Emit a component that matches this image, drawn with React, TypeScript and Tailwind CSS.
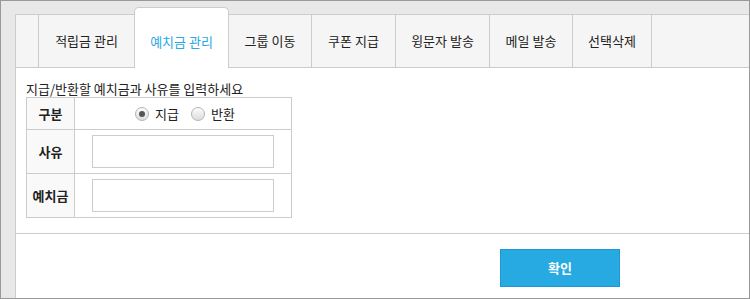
const tabs = [
  { label: "적립금 관리", w: "w-[95px]", cls: "" },
  { label: "예치금 관리", w: "w-[95px]", cls: "active" },
  { label: "그룹 이동", w: "w-[83px]", cls: "border-r" },
  { label: "쿠폰 지급", w: "w-[84px]", cls: "border-r" },
  { label: "윙문자 발송", w: "w-[94px]", cls: "border-r" },
  { label: "메일 발송", w: "w-[83px]", cls: "border-r" },
  { label: "선택삭제", w: "w-[79px]", cls: "border-r" },
];

function Radio({ checked }: { checked?: boolean }) {
  return (
    <span className="flex h-[14px] w-[14px] items-center justify-center rounded-full border border-[#b5b5b5] bg-gradient-to-b from-[#fdfdfd] to-[#dcdcdc]">
      {checked && <span className="h-[6px] w-[6px] rounded-full bg-[#555]" />}
    </span>
  );
}

export default function App() {
  return (
    <div
      className="box-border flex h-[299px] w-[750px] flex-col border border-[#999] bg-[#e8e8e8] pl-[14px] pt-[6px] text-[13px] text-[#222]"
      style={{ fontFamily: '"Noto Sans CJK KR", "Noto Sans", sans-serif' }}
    >
      {/* tab bar */}
      <div className="flex h-[61px] items-end">
        <div className="box-border h-[54px] w-[24px] border border-[#ccc] bg-[#f5f5f5]" />
        {tabs.map((t) =>
          t.cls === "active" ? (
            <div
              key={t.label}
              className={`box-border flex h-[61px] ${t.w} items-center justify-center rounded-t-[5px] border-x border-t border-[#ccc] bg-white pt-[7px] text-[#29a9e0]`}
            >
              {t.label}
            </div>
          ) : (
            <div
              key={t.label}
              className={`box-border flex h-[54px] ${t.w} items-center justify-center border-y border-[#ccc] bg-[#f5f5f5] text-[#222] ${t.cls === "border-r" ? "border-r" : ""}`}
            >
              {t.label}
            </div>
          )
        )}
        <div className="box-border h-[54px] flex-1 border-y border-[#ccc] bg-[#f5f5f5]" />
      </div>

      {/* body */}
      <div className="flex flex-1 flex-col border-l border-[#ccc] bg-white">
        <div className="h-[165px] pl-[10px] pt-[12px]">
          <p className="h-[17px] leading-[17px] text-[#222]">지급/반환할 예치금과 사유를 입력하세요</p>
          <table className="w-[266px] border-collapse border border-[#ccc]">
            <tbody>
              <tr className="h-[32px]">
                <th className="w-[48px] border border-[#ccc] bg-[#f9f9f9] p-0 font-bold">구분</th>
                <td className="border border-[#ccc] p-0">
                  <div className="flex items-center justify-center gap-[6px] pl-[4px]">
                    <Radio checked />
                    <span className="mr-[6px]">지급</span>
                    <Radio />
                    <span>반환</span>
                  </div>
                </td>
              </tr>
              <tr className="h-[44px]">
                <th className="border border-[#ccc] bg-[#f9f9f9] p-0 font-bold">사유</th>
                <td className="border border-[#ccc] p-0 pl-[17px]">
                  <div className="h-[33px] w-[182px] border border-[#ccc] bg-white" />
                </td>
              </tr>
              <tr className="h-[44px]">
                <th className="border border-[#ccc] bg-[#f9f9f9] p-0 font-bold">예치금</th>
                <td className="border border-[#ccc] p-0 pl-[17px]">
                  <div className="h-[33px] w-[182px] border border-[#ccc] bg-white" />
                </td>
              </tr>
            </tbody>
          </table>
        </div>
        <div className="flex-1 border-t border-[#ccc] pl-[484px] pt-[15px]">
          <button className="box-border h-[38px] w-[120px] border border-[#2196d3] bg-[#27aae1] font-bold text-white">
            확인
          </button>
        </div>
      </div>
    </div>
  );
}
